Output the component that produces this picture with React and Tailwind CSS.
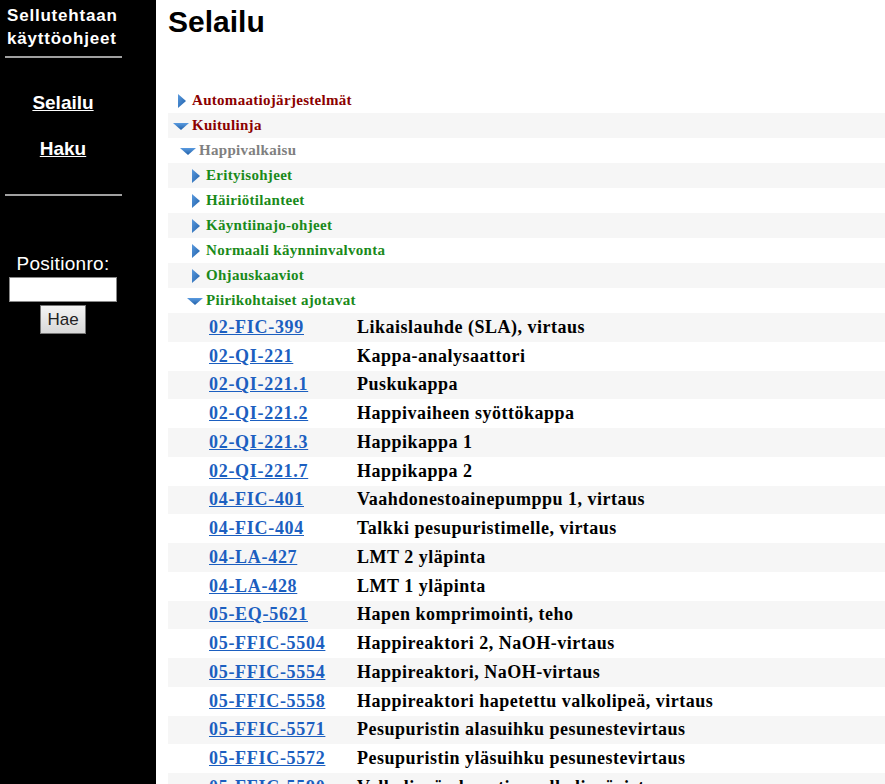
import React from "react";

const sans = { fontFamily: '"Liberation Sans", Arial, sans-serif' };
const serif = { fontFamily: '"Liberation Serif", "Times New Roman", serif' };

function RightArrow() {
  return (
    <svg width="16" height="16" viewBox="0 0 16 16" className="shrink-0">
      <defs>
        <linearGradient id="ra" x1="0" y1="0" x2="1" y2="1">
          <stop offset="0" stopColor="#5a9be0" />
          <stop offset="1" stopColor="#1f5fa8" />
        </linearGradient>
      </defs>
      <path d="M5 1 L13 8 L5 15 Z" fill="url(#ra)" />
    </svg>
  );
}

function DownArrow() {
  return (
    <svg width="16" height="16" viewBox="0 0 16 16" className="shrink-0">
      <defs>
        <linearGradient id="da" x1="0" y1="0" x2="0" y2="1">
          <stop offset="0" stopColor="#5a9be0" />
          <stop offset="1" stopColor="#1f5fa8" />
        </linearGradient>
      </defs>
      <path d="M0 5 L16 5 L8 12 Z" fill="url(#da)" />
    </svg>
  );
}

const tree = [
  { label: "Automaatiojärjestelmät", level: 0, open: false, color: "text-[#8b0000]" },
  { label: "Kuitulinja", level: 0, open: true, color: "text-[#8b0000]" },
  { label: "Happivalkaisu", level: 1, open: true, color: "text-[#808080]" },
  { label: "Erityisohjeet", level: 2, open: false, color: "text-[#1a8a1a]" },
  { label: "Häiriötilanteet", level: 2, open: false, color: "text-[#1a8a1a]" },
  { label: "Käyntiinajo-ohjeet", level: 2, open: false, color: "text-[#1a8a1a]" },
  { label: "Normaali käynninvalvonta", level: 2, open: false, color: "text-[#1a8a1a]" },
  { label: "Ohjauskaaviot", level: 2, open: false, color: "text-[#1a8a1a]" },
  { label: "Piirikohtaiset ajotavat", level: 2, open: true, color: "text-[#1a8a1a]" },
];

const rows = [
  ["02-FIC-399", "Likaislauhde (SLA), virtaus"],
  ["02-QI-221", "Kappa-analysaattori"],
  ["02-QI-221.1", "Puskukappa"],
  ["02-QI-221.2", "Happivaiheen syöttökappa"],
  ["02-QI-221.3", "Happikappa 1"],
  ["02-QI-221.7", "Happikappa 2"],
  ["04-FIC-401", "Vaahdonestoainepumppu 1, virtaus"],
  ["04-FIC-404", "Talkki pesupuristimelle, virtaus"],
  ["04-LA-427", "LMT 2 yläpinta"],
  ["04-LA-428", "LMT 1 yläpinta"],
  ["05-EQ-5621", "Hapen komprimointi, teho"],
  ["05-FFIC-5504", "Happireaktori 2, NaOH-virtaus"],
  ["05-FFIC-5554", "Happireaktori, NaOH-virtaus"],
  ["05-FFIC-5558", "Happireaktori hapetettu valkolipeä, virtaus"],
  ["05-FFIC-5571", "Pesupuristin alasuihku pesunestevirtaus"],
  ["05-FFIC-5572", "Pesupuristin yläsuihku pesunestevirtaus"],
  ["05-FFIC-5590", "Valkolipeän hapetin, valkolipeävirtaus"],
];

const indent = ["pl-[5px]", "pl-[12px]", "pl-[19px]"];

export default function App() {
  return (
    <div className="flex h-[784px] overflow-hidden bg-white">
      {/* Sidebar */}
      <aside className="w-[156px] shrink-0 bg-black text-white" style={sans}>
        <div className="px-[7px] pt-[4px] text-[17px] font-bold leading-[23px] tracking-[0.8px]">
          Sellutehtaan<br />käyttöohjeet
        </div>
        <div className="ml-[5px] mt-[6px] w-[117px] h-[2px] bg-[#a0a0a0]" />
        <nav className="flex flex-col items-center w-[126px] pt-[33px] gap-[22px] text-[19px] font-bold leading-[24px]">
          <a href="#" className="underline">Selailu</a>
          <a href="#" className="underline">Haku</a>
        </nav>
        <div className="ml-[5px] mt-[33px] w-[117px] h-[2px] bg-[#a0a0a0]" />
        <div className="flex flex-col items-center w-[126px] pt-[56px]">
          <div className="text-[19px] leading-[24px] tracking-[0.3px]">Positionro:</div>
          <input className="mt-[1px] w-[108px] h-[25px] bg-white border border-[#888]" />
          <button className="mt-[3px] w-[46px] h-[29px] text-[17px] text-[#222] bg-gradient-to-b from-[#f4f4f4] to-[#d8d8d8] border border-[#777]">
            Hae
          </button>
        </div>
      </aside>

      {/* Main */}
      <main className="flex-1 pl-[12px]">
        <h1 className="pt-[4px] text-[30px] font-bold leading-[36px] text-black" style={sans}>Selailu</h1>
        <div className="mt-[48px]" style={serif}>
          {tree.map((t, i) => (
            <div
              key={t.label}
              className={`flex items-center h-[25px] ${indent[t.level]} ${i % 2 === 1 ? "bg-[#f6f6f6]" : "bg-white"}`}
            >
              {t.open ? <DownArrow /> : <RightArrow />}
              <span className={`ml-[3px] text-[15px] font-bold tracking-[0.3px] ${t.color}`}>{t.label}</span>
            </div>
          ))}
          {rows.map(([code, desc], i) => (
            <div
              key={code}
              className={`flex items-center h-[28.75px] ${i % 2 === 0 ? "bg-[#f6f6f6]" : "bg-white"}`}
            >
              <a href="#" className="ml-[41px] w-[148px] shrink-0 text-[18px] font-bold tracking-[0.7px] text-[#1c5fc0] underline">
                {code}
              </a>
              <span className="text-[18px] font-bold tracking-[0.5px] text-black whitespace-nowrap">{desc}</span>
            </div>
          ))}
        </div>
      </main>
    </div>
  );
}
